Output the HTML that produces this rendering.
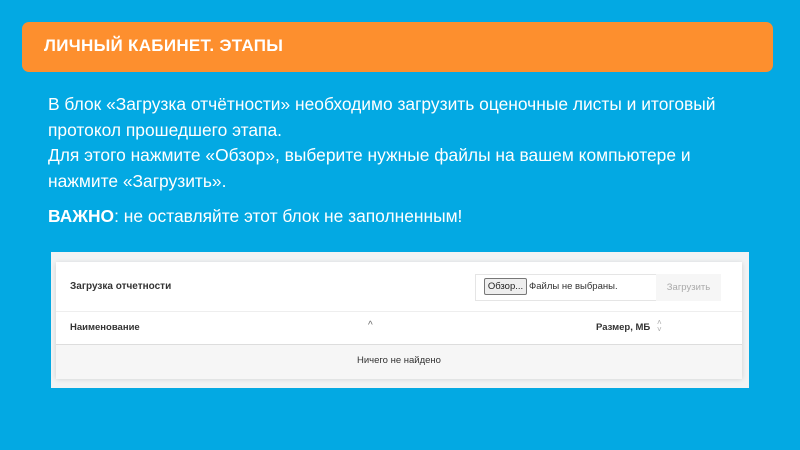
<!DOCTYPE html>
<html><head><meta charset="utf-8"><style>
body{margin:0;width:800px;height:450px;background:#03a9e3;font-family:"Liberation Sans","DejaVu Sans",sans-serif;position:relative;overflow:hidden}
.bar{position:absolute;left:22px;top:22px;width:751px;height:50px;background:#fd8f2e;border-radius:7px}
.bar span{position:absolute;left:22px;top:14px;color:#fff;font-weight:bold;font-size:17px;letter-spacing:0.3px}
.txt{position:absolute;left:48px;top:92px;color:#fff;font-size:17.4px;line-height:25.5px;white-space:nowrap}
.imp{position:absolute;left:48px;top:206px;color:#fff;font-size:17.4px;white-space:nowrap}
.shot{position:absolute;left:51px;top:252px;width:698px;height:136px;background:#f1f3f4}
.card{position:absolute;left:5px;top:10px;width:686px;height:116px;background:#fff;box-shadow:0 1px 5px rgba(0,0,0,.15)}
.t{position:absolute;font-size:10px;color:#333}
</style></head><body>
<div class="bar"><span>ЛИЧНЫЙ КАБИНЕТ. ЭТАПЫ</span></div>
<div class="txt">В блок «Загрузка отчётности» необходимо загрузить оценочные листы и итоговый<br>протокол прошедшего этапа.<br>Для этого нажмите «Обзор», выберите нужные файлы на вашем компьютере и<br>нажмите «Загрузить».</div>
<div class="imp"><b>ВАЖНО</b>: не оставляйте этот блок не заполненным!</div>
<div class="shot"><div class="card">
<div class="t" style="left:14px;top:19px;font-weight:bold">Загрузка отчетности</div>
<div style="position:absolute;left:419px;top:12px;width:180px;height:25px;border:1px solid #e5e5e5"></div>
<div style="position:absolute;left:428px;top:16px;width:41px;height:15px;border:1px solid #777;border-radius:2px;background:#eee;font-size:9.5px;line-height:15px;text-align:center;color:#222">Обзор...</div>
<div class="t" style="left:473px;top:19px;font-size:9.5px">Файлы не выбраны.</div>
<div style="position:absolute;left:600px;top:12px;width:65px;height:27px;background:#f6f6f6;font-size:9.5px;line-height:27px;text-align:center;color:#aaa">Загрузить</div>
<div style="position:absolute;left:0;top:49px;width:686px;height:1px;background:#eee"></div>
<div class="t" style="left:14px;top:60px;font-weight:bold;font-size:9.5px">Наименование</div>
<div class="t" style="left:312px;top:58px;color:#666">^</div>
<div class="t" style="left:540px;top:60px;font-weight:bold;font-size:9.5px">Размер, МБ</div>
<div class="t" style="left:601px;top:57px;color:#aaa;font-size:8px;line-height:7px">˄<br>˅</div>
<div style="position:absolute;left:0;top:82px;width:686px;height:34px;background:#f6f6f6;border-top:1px solid #ddd"></div>
<div class="t" style="left:0;width:686px;text-align:center;top:93px;font-size:9.5px">Ничего не найдено</div>
</div></div>
</body></html>
